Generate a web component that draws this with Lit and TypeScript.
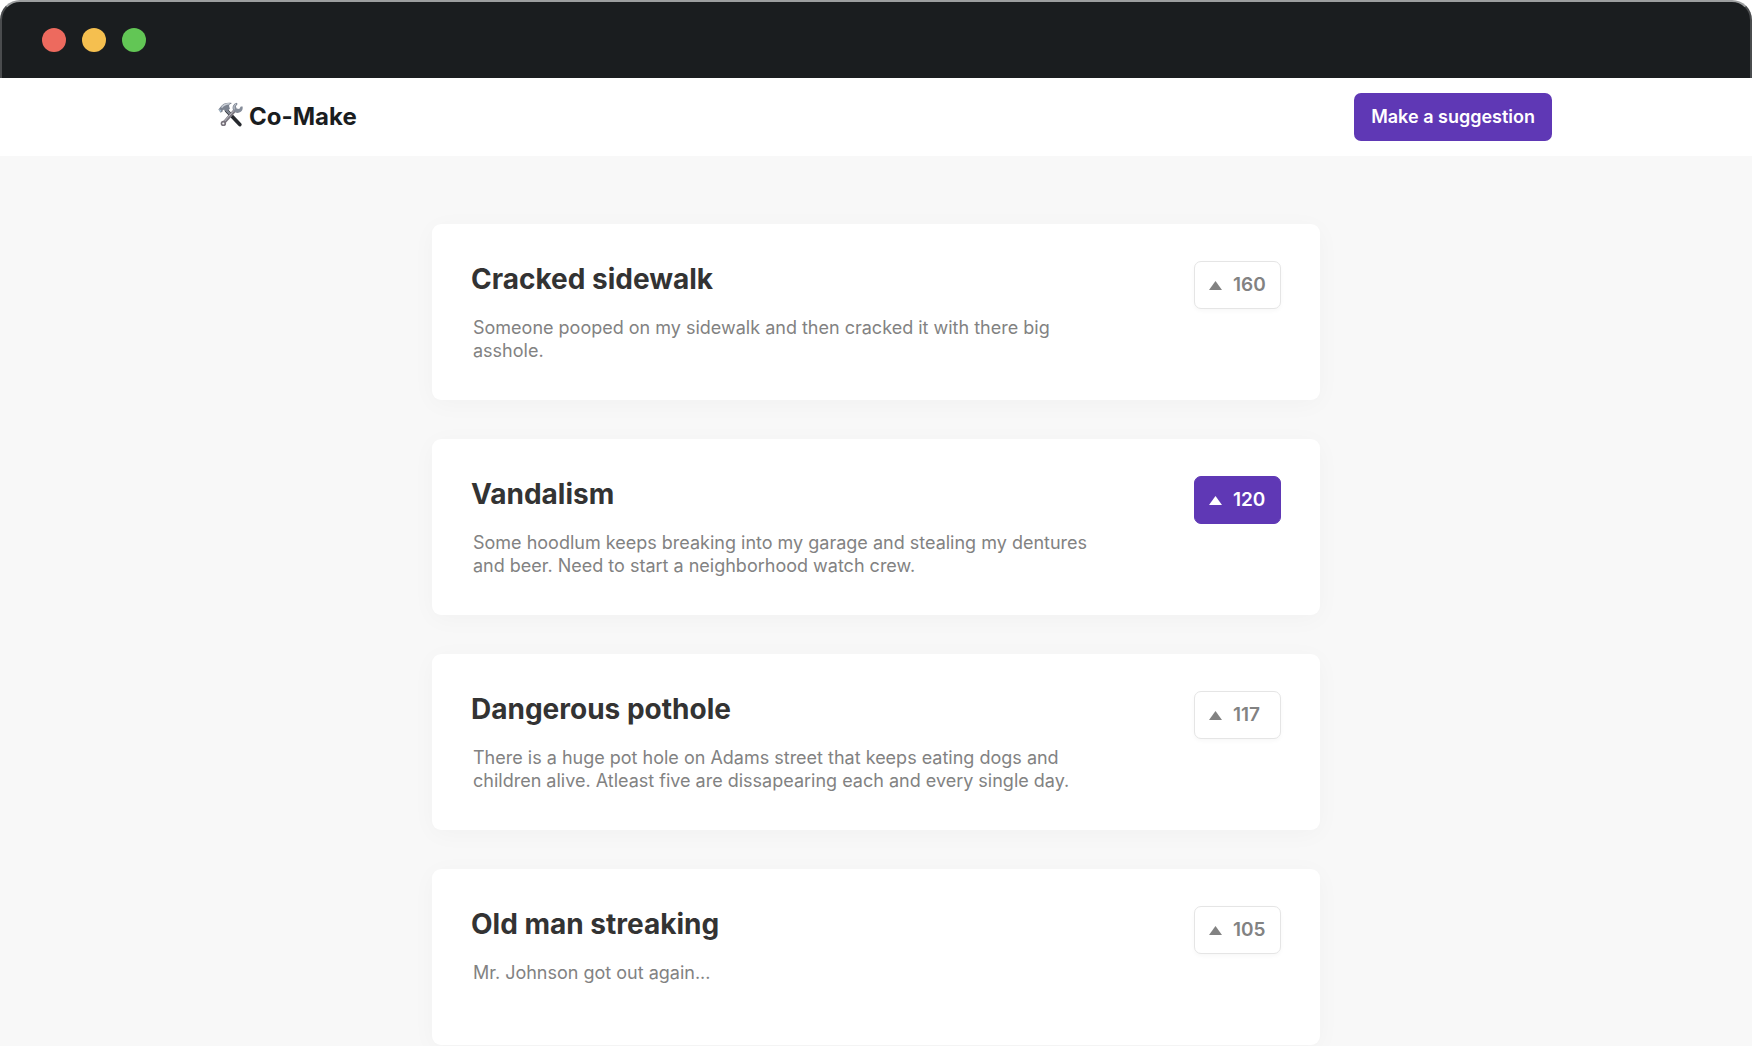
import { LitElement, html, css, svg } from "lit";
import { customElement, property, state } from "lit/decorators.js";
import { classMap } from "lit/directives/class-map.js";

interface Suggestion {
  title: string;
  text: string;
  votes: number;
  voted: boolean;
}

const toolsIcon = svg`
  <path d="M8.5 8.5 L21.8 22.6" stroke="#26292e" stroke-width="3.6" stroke-linecap="round" />
  <path d="M9.2 9 L13 13.2" stroke="#7f8590" stroke-width="2.6" stroke-linecap="round" />
  <path d="M16.6 8.6 L5.6 21" stroke="#7c7880" stroke-width="3.3" stroke-linecap="round" />
  <path d="M16.2 8.2 L6 19.8" stroke="#b7b9c2" stroke-width="1" stroke-linecap="round" />
  <circle cx="5.4" cy="21.4" r="2.7" fill="#77717a" />
  <circle cx="5.3" cy="21.5" r="1.1" fill="#f3f3f5" />
  <path d="M18.8 0.8 C15.2 1.8 13.9 5 15 7.8 C16.4 11 20.2 11.8 22.8 9.8 C24.4 8.6 25 6.6 24.6 4.6 L22.8 4.6 L21.2 7 L18.6 6.6 L17.9 4.2 L19.6 2 Z" fill="#858c99" />
  <path d="M18 2.2 C16 3.4 15.6 5.6 16.4 7.4" fill="none" stroke="#c3c8d0" stroke-width="1" />
  <path d="M0.4 7.4 L2.4 5 C4.6 1.8 8.4 0.2 14 1.1 C12.4 2 11.4 2.8 11 3.8 L11.9 6.8 L8.4 10 L6.2 7.8 L4.8 8 L4.6 9.4 L2.6 10.8 Z" fill="#7b828f" />
  <path d="M3.6 5.6 C5.6 2.8 8.4 1.8 11.6 1.8" fill="none" stroke="#c9ced6" stroke-width="1.4" />
  <path d="M1.4 7.6 L3 9.3" stroke="#b4d0e4" stroke-width="1.2" />
`;

@customElement("window-bar")
export class WindowBar extends LitElement {
  static styles = css`
    :host {
      display: block;
      background: #fff;
    }
    .bar {
      display: flex;
      align-items: center;
      gap: 16px;
      box-sizing: border-box;
      height: 78px;
      padding: 0 40px;
      background: #1a1d1f;
      border: 2px solid #4a4c4e;
      border-top-color: #9c9e9f;
      border-bottom: 0;
      border-radius: 20px 20px 0 0;
    }
    .dot {
      width: 24px;
      height: 24px;
      border-radius: 50%;
    }
    .close {
      background: #ed6a5e;
    }
    .minimise {
      background: #f5bf4f;
    }
    .zoom {
      background: #62c655;
    }
  `;

  render() {
    return html`<div class="bar">
      <span class="dot close"></span>
      <span class="dot minimise"></span>
      <span class="dot zoom"></span>
    </div>`;
  }
}

@customElement("suggestion-card")
export class SuggestionCard extends LitElement {
  @property({ attribute: false }) item!: Suggestion;

  static styles = css`
    :host {
      display: block;
    }
    .card {
      display: flex;
      justify-content: space-between;
      align-items: flex-start;
      gap: 24px;
      box-sizing: border-box;
      min-height: 176px;
      padding: 37px 39px 36px;
      background: #fff;
      border-radius: 9px;
      box-shadow: 0 4px 24px rgba(0, 0, 0, 0.03);
    }
    .body {
      flex: 1;
      max-width: 630px;
    }
    .title {
      margin: 0;
      font-size: 28px;
      line-height: 36px;
      font-weight: 700;
      color: #333;
    }
    .text {
      margin: 19px 0 0;
      padding-left: 2px;
      font-size: 18px;
      line-height: 23px;
      color: #828282;
    }
    .vote {
      display: flex;
      align-items: center;
      gap: 11px;
      box-sizing: border-box;
      width: 87px;
      height: 48px;
      padding: 0 14px;
      border: 1px solid #e5e5e5;
      border-radius: 7px;
      background: #fff;
      box-shadow: 0 2px 4px rgba(0, 0, 0, 0.03);
      color: #828282;
      font: 600 19px/24px Inter, "Liberation Sans", sans-serif;
      cursor: pointer;
    }
    .arrow {
      flex: none;
      width: 13px;
      height: 9px;
      fill: currentColor;
    }
    .voted {
      background: #5f38b5;
      border-color: #5f38b5;
      box-shadow: none;
      color: #fff;
    }
  `;

  private toggle() {
    const { voted, votes } = this.item;
    this.item = { ...this.item, voted: !voted, votes: votes + (voted ? -1 : 1) };
  }

  render() {
    const { title, text, votes, voted } = this.item;
    return html`<article class="card">
      <div class="body">
        <h2 class="title">${title}</h2>
        <p class="text">${text}</p>
      </div>
      <button
        type="button"
        class=${classMap({ vote: true, voted })}
        aria-pressed=${voted ? "true" : "false"}
        @click=${this.toggle}
      >
        <svg class="arrow" viewBox="0 0 13 9" aria-hidden="true"><path d="M6.5 0 L13 9 H0 Z" /></svg>
        <span>${votes}</span>
      </button>
    </article>`;
  }
}

@customElement("app-root")
export class AppRoot extends LitElement {
  @state() private items: Suggestion[] = [
    {
      title: "Cracked sidewalk",
      text: "Someone pooped on my sidewalk and then cracked it with there big asshole.",
      votes: 160,
      voted: false,
    },
    {
      title: "Vandalism",
      text: "Some hoodlum keeps breaking into my garage and stealing my dentures and beer. Need to start a neighborhood watch crew.",
      votes: 120,
      voted: true,
    },
    {
      title: "Dangerous pothole",
      text: "There is a huge pot hole on Adams street that keeps eating dogs and children alive. Atleast five are dissapearing each and every single day.",
      votes: 117,
      voted: false,
    },
    {
      title: "Old man streaking",
      text: "Mr. Johnson got out again...",
      votes: 105,
      voted: false,
    },
  ];

  static styles = css`
    :host {
      display: flex;
      flex-direction: column;
      height: 100vh;
      overflow: hidden;
      background: #f8f8f8;
      font-family: Inter, "Liberation Sans", sans-serif;
    }
    .nav {
      flex: none;
      background: #fff;
    }
    .nav-inner {
      display: flex;
      align-items: center;
      justify-content: space-between;
      box-sizing: border-box;
      max-width: 1352px;
      height: 78px;
      margin: 0 auto;
      padding-left: 18px;
    }
    .brand {
      display: flex;
      align-items: center;
      gap: 6px;
      color: #1a1d1f;
      font-size: 24px;
      line-height: 32px;
      font-weight: 700;
      text-decoration: none;
    }
    .brand-icon {
      width: 25px;
      height: 25px;
      margin-bottom: 5px;
    }
    .suggest {
      height: 48px;
      padding: 0 17px;
      border: 0;
      border-radius: 7px;
      background: #5f38b5;
      color: #fff;
      font: 600 18px/24px Inter, "Liberation Sans", sans-serif;
      cursor: pointer;
    }
    .feed {
      display: flex;
      flex-direction: column;
      flex: 1;
      gap: 39px;
      box-sizing: border-box;
      width: 100%;
      max-width: 888px;
      min-height: 0;
      margin: 0 auto;
      padding-top: 68px;
    }
    .entry {
      flex: none;
    }
  `;

  render() {
    return html`
      <window-bar></window-bar>
      <header class="nav">
        <div class="nav-inner">
          <a class="brand" href="#">
            <svg class="brand-icon" viewBox="0 0 25 25" fill="none" aria-hidden="true">${toolsIcon}</svg>
            <span>Co-Make</span>
          </a>
          <button class="suggest" type="button">Make a suggestion</button>
        </div>
      </header>
      <main class="feed">
        ${this.items.map((item) => html`<suggestion-card class="entry" .item=${item}></suggestion-card>`)}
      </main>
    `;
  }
}
